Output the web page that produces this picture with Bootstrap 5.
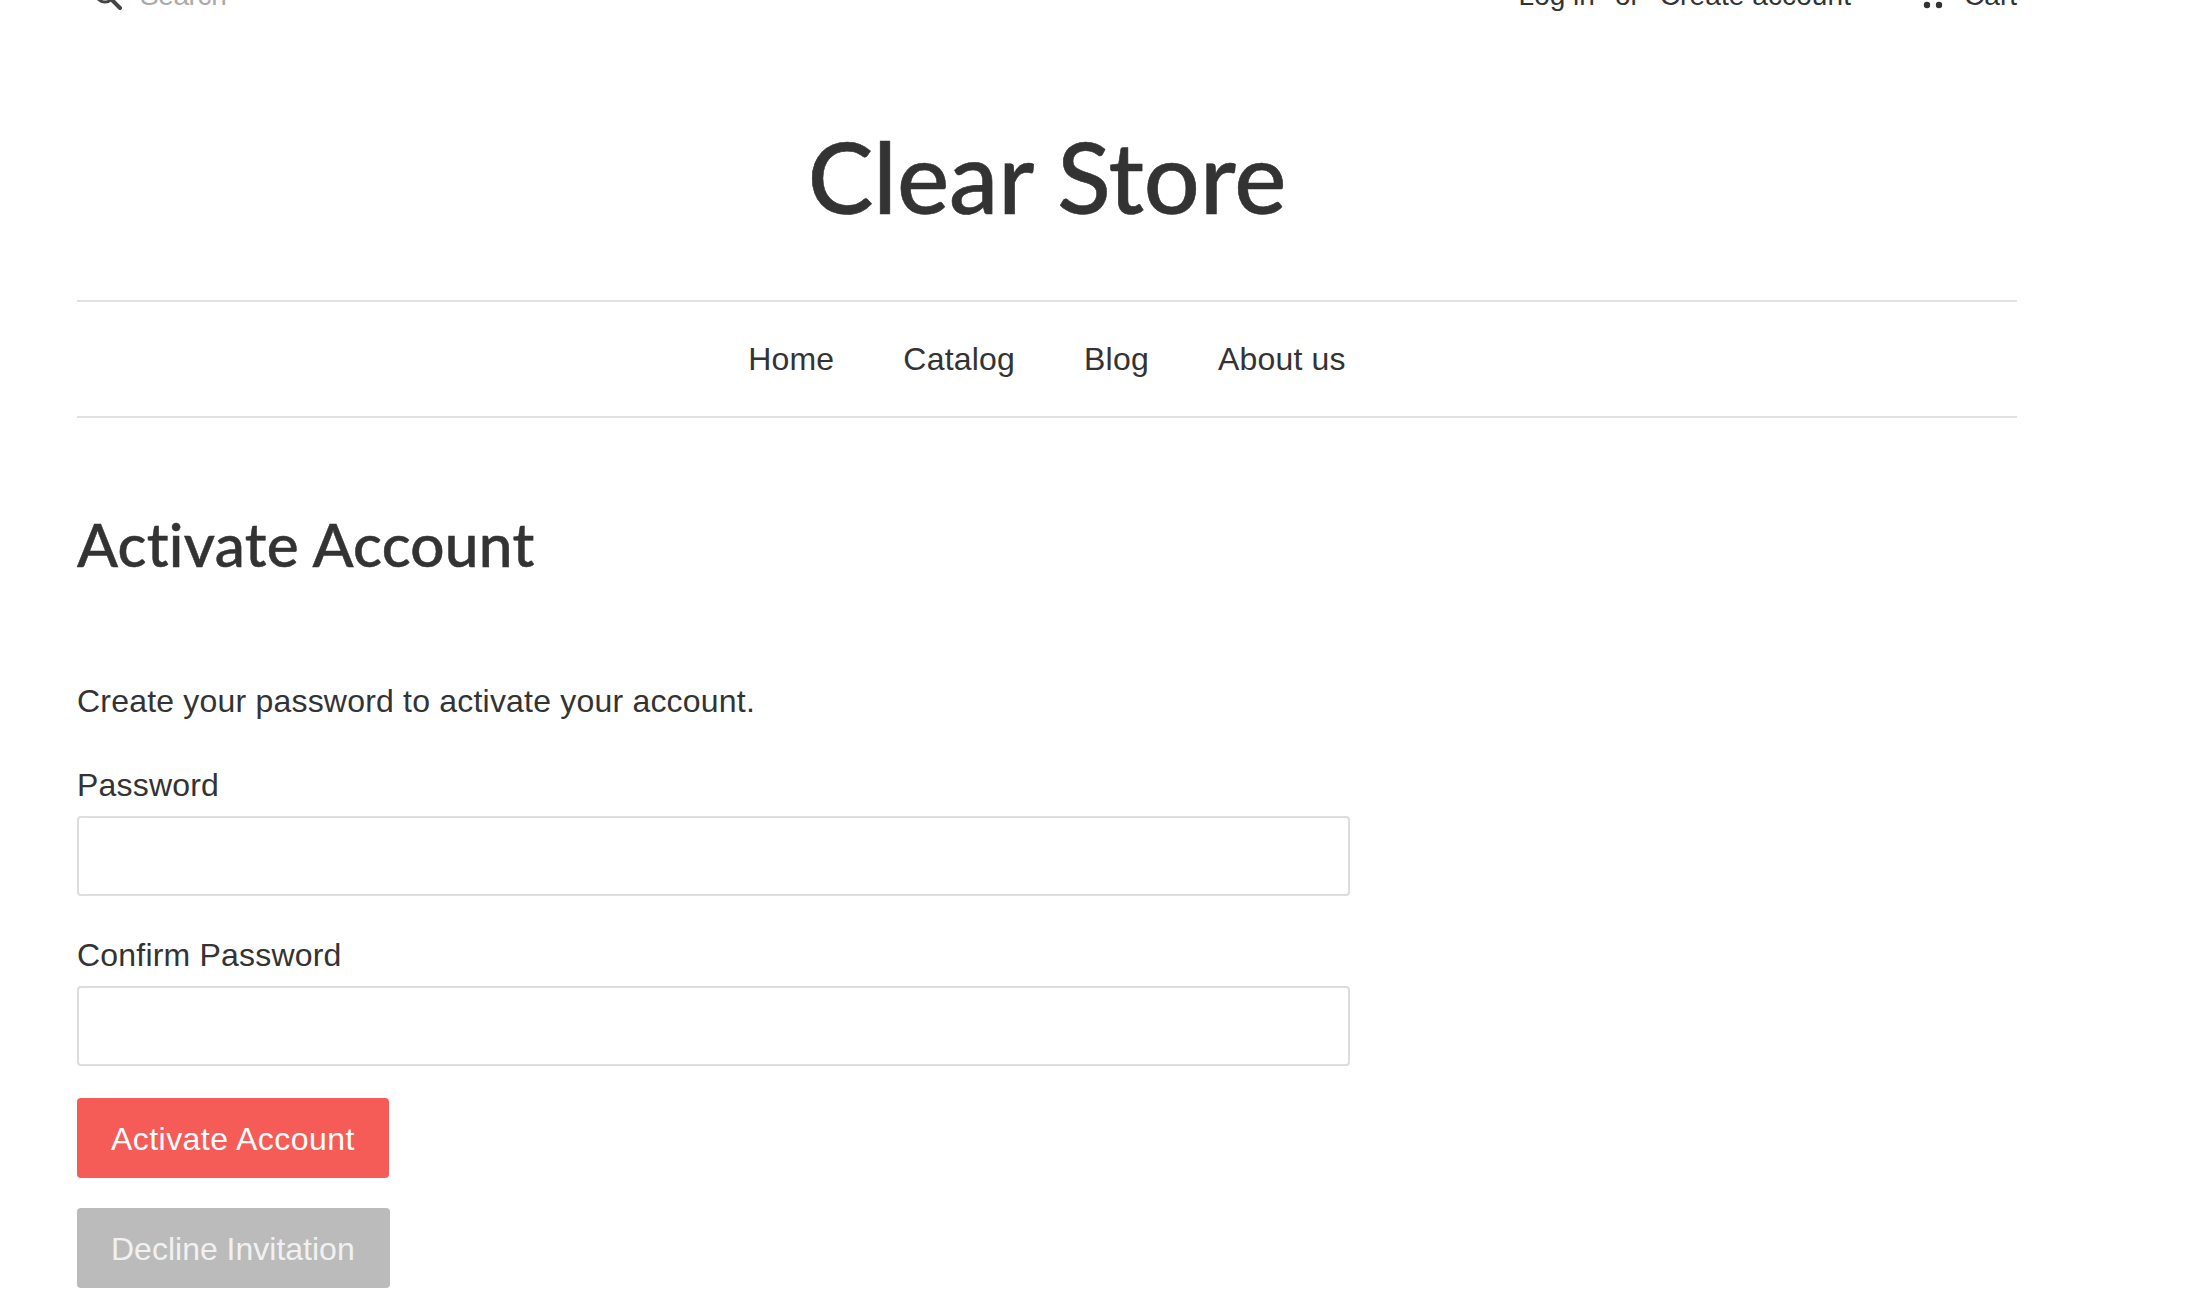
<!DOCTYPE html>
<html lang="en">
<head>
<meta charset="utf-8">
<title>Clear Store</title>
<link href="https://cdn.jsdelivr.net/npm/bootstrap@5.3.0/dist/css/bootstrap.min.css" rel="stylesheet">
<style>
html, body { overflow: hidden; height: 1308px; }
body { font-family: "Liberation Sans", Arial, sans-serif; font-size: 32px; letter-spacing: .2px; color: #333; background: #fff; }
.shop-wrap { width: 1940px; margin-left: 77px; }
.top-strip { margin-top: -21px; height: 34px; line-height: 34px; font-size: 28px; letter-spacing: 0; }
.search-box { color: #aaa; gap: 18px; padding-left: 17px; }
.search-word { letter-spacing: -.4px; }
.or-word { margin: 0 20px; }
.sign-up { letter-spacing: .1px; }
.cart-mark { margin: 0 17px 0 68px; }
.store-name { font-family: Lato, sans-serif; font-weight: 500; font-size: 98.5px; line-height: 100px; letter-spacing: 0; -webkit-text-stroke: .6px #333; color: #333; margin: 0; padding-top: 113px; padding-bottom: 74px; text-align: center; }
.main-menu { border-top: 2px solid #e0e0e0; border-bottom: 2px solid #e0e0e0; height: 118px; gap: 69px; }
.main-menu a { color: #333; text-decoration: none; }
.page-title { font-family: Lato, sans-serif; font-weight: 500; font-size: 60.3px; line-height: 72px; letter-spacing: .3px; -webkit-text-stroke: .5px #333; color: #333; margin: 0; padding-top: 90px; padding-bottom: 98px; }
.intro-line { margin: 0 0 32px; line-height: 46px; }
.field-label { display: block; line-height: 46px; padding-top: 6px; margin: 0 0 8px; }
.field-input { width: 1273px; height: 80px; border: 2px solid #ddd; border-radius: 4px; background: #fff; margin-bottom: 30px; }
.act-btn { display: block; font-size: 32px; line-height: 36px; color: #fff; border: 0; border-radius: 4px; padding: 23px 34px 21px; background: #f65c57; height: 80px; }
.act-btn:hover { color: #fff; }
.btn-primary-act { margin-top: 32px; margin-bottom: 30px; letter-spacing: .45px; }
.btn-decline { background: #bbb; color: #f1f1f1; letter-spacing: 0; padding-right: 35px; }
</style>
</head>
<body>
<div class="shop-wrap">
  <div class="top-strip d-flex justify-content-between align-items-center">
    <div class="search-box d-flex align-items-center">
      <svg width="28" height="28" viewBox="0 0 28 28" fill="none" stroke="#444" aria-hidden="true"><circle cx="11" cy="11" r="9" stroke-width="3"/><path d="M17.5 17.5 L26 26" stroke-width="4" stroke-linecap="round"/></svg>
      <span class="search-word">Search</span>
    </div>
    <div class="d-flex align-items-center">
      <span>Log in</span><span class="or-word">or</span><span class="sign-up">Create account</span>
      <svg class="cart-mark" width="28" height="34" viewBox="0 0 28 34" fill="#333" aria-hidden="true"><path d="M1 2h5l3 14h15l3-10H7" fill="none" stroke="#333" stroke-width="2.5"/><circle cx="8" cy="26" r="3.2"/><circle cx="20" cy="26" r="3.2"/></svg>
      <span>Cart</span>
    </div>
  </div>
  <h1 class="store-name">Clear Store</h1>
  <nav class="main-menu d-flex justify-content-center align-items-center">
    <a href="#">Home</a><a href="#">Catalog</a><a href="#">Blog</a><a href="#">About us</a>
  </nav>
  <h2 class="page-title">Activate Account</h2>
  <p class="intro-line">Create your password to activate your account.</p>
  <form>
    <label class="field-label" for="pw">Password</label>
    <input class="field-input d-block" id="pw" type="password">
    <label class="field-label" for="pw2">Confirm Password</label>
    <input class="field-input d-block" id="pw2" type="password">
    <button type="button" class="btn act-btn btn-primary-act">Activate Account</button>
    <button type="button" class="btn act-btn btn-decline">Decline Invitation</button>
  </form>
</div>
</body>
</html>
